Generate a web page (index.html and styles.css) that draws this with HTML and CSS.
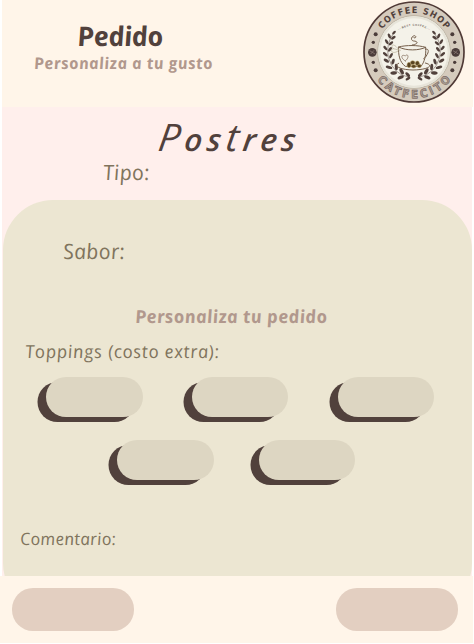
FILE: index.html
```html
<!DOCTYPE html>
<html lang="es">
<head>
<meta charset="utf-8">
<title>Pedido</title>
<link rel="stylesheet" href="styles.css">
</head>
<body>
<div class="page">
  <header class="header">
    <div class="heading">
      <h1 class="title"><span>Pedido</span></h1>
      <p class="subtitle"><span>Personaliza a tu gusto</span></p>
    </div>
    <svg class="logo" viewBox="0 0 306 306">
      <defs>
        <path id="top" d="M36 153A117 117 0 0 1 270 153"/>
        <path id="bottom" d="M14 153A139 139 0 0 0 292 153"/>
        <path id="small" d="M74 153A79 79 0 0 1 232 153"/>
        <g id="laurel">
          <path d="M139 229Q91 220 76 170Q67 124 96 92" fill="none" stroke="#51413c" stroke-width="1.5"/>
          <g fill="#51413c">
            <ellipse cx="93" cy="95" rx="7" ry="3.5" transform="rotate(-45 93 95)"/>
            <ellipse cx="79" cy="105" rx="8" ry="4" transform="rotate(65 79 105)"/>
            <ellipse cx="91" cy="110" rx="8" ry="4" transform="rotate(-35 91 110)"/>
            <ellipse cx="71" cy="122" rx="8" ry="4" transform="rotate(60 71 122)"/>
            <ellipse cx="84" cy="127" rx="8" ry="4" transform="rotate(-40 84 127)"/>
            <ellipse cx="67" cy="141" rx="8" ry="4" transform="rotate(50 67 141)"/>
            <ellipse cx="81" cy="145" rx="8" ry="4" transform="rotate(-50 81 145)"/>
            <ellipse cx="67" cy="160" rx="9" ry="4" transform="rotate(40 67 160)"/>
            <ellipse cx="84" cy="164" rx="9" ry="4" transform="rotate(-60 84 164)"/>
            <ellipse cx="70" cy="179" rx="9" ry="4.5" transform="rotate(30 70 179)"/>
            <ellipse cx="90" cy="182" rx="9" ry="4.5" transform="rotate(-70 90 182)"/>
            <ellipse cx="78" cy="199" rx="10" ry="4.5" transform="rotate(15 78 199)"/>
            <ellipse cx="100" cy="198" rx="10" ry="4.5" transform="rotate(-95 100 198)"/>
            <ellipse cx="92" cy="216" rx="10" ry="5" transform="rotate(-5 92 216)"/>
            <ellipse cx="116" cy="211" rx="10" ry="5" transform="rotate(60 116 211)"/>
            <ellipse cx="113" cy="229" rx="10" ry="5" transform="rotate(-25 113 229)"/>
            <ellipse cx="134" cy="221" rx="9" ry="4.5" transform="rotate(45 134 221)"/>
            <ellipse cx="135" cy="233" rx="8" ry="4" transform="rotate(-30 135 233)"/>
          </g>
        </g>
      </defs>
      <circle cx="153" cy="153" r="150" fill="#d5cbbd" stroke="#503a36" stroke-width="5"/>
      <circle cx="153" cy="153" r="109" fill="#f4f2e9" stroke="#aaa190" stroke-width="2"/>
      <circle cx="153" cy="153" r="104" fill="none" stroke="#e7e4d9" stroke-width="6"/>
      <text class="ring-text" text-anchor="middle"><textPath href="#top" startOffset="50%" textLength="222">COFFEE SHOP</textPath></text>
      <text class="ring-name" text-anchor="middle"><textPath href="#bottom" startOffset="50%" textLength="256">CATFECITO</textPath></text>
      <text class="ring-small" text-anchor="middle"><textPath href="#small" startOffset="50%" textLength="100">···BEST COFFEE···</textPath></text>
      <g fill="#4b3c3a">
        <circle cx="38" cy="100" r="6"/><circle cx="31" cy="124" r="5"/><circle cx="28" cy="154" r="13"/><circle cx="31" cy="184" r="5"/><circle cx="38" cy="208" r="6"/>
        <circle cx="268" cy="100" r="6"/><circle cx="275" cy="124" r="5"/><circle cx="278" cy="154" r="13"/><circle cx="275" cy="184" r="5"/><circle cx="268" cy="208" r="6"/>
      </g>
      <g fill="none" stroke="#94827b" stroke-width="2"><path d="M20 149L36 159M23 159L33 148M270 149L286 159M273 159L283 148"/></g>
      <use href="#laurel"/>
      <use href="#laurel" transform="translate(306 0) scale(-1 1)"/>
      <g fill="none" stroke="#755f4b" stroke-width="3" stroke-linecap="round">
        <path d="M107 138C105 160 110 184 127 196H174C184 184 190 163 188 139C165 132 129 132 107 138C130 150 168 149 188 139"/>
        <path d="M188 145C196 141 199 151 192 161C189 168 184 172 182 173"/>
        <path d="M107 187C91 192 105 206 150 207C197 206 215 193 187 186"/>
        <path d="M148 132C171 128 162 120 152 120C141 118 145 105 155 104C163 107 155 115 152 109"/>
        <path d="M127 180C110 170 116 158 127 165C133 156 142 168 127 180" stroke-width="2"/>
        <path d="M105 143C90 123 81 134 91 143C77 147 89 162 105 150M91 143L112 148" stroke="#b4aa91" stroke-width="2"/>
      </g>
      <g fill="#584321" stroke="#b9a067" stroke-width="1.5">
        <ellipse cx="138" cy="192" rx="6" ry="8"/><ellipse cx="149" cy="185" rx="7" ry="6"/><ellipse cx="152" cy="196" rx="7" ry="5"/><ellipse cx="163" cy="187" rx="6" ry="7"/><ellipse cx="169" cy="195" rx="6" ry="5"/>
      </g>
    </svg>
  </header>

  <main class="main">
    <h2 class="category"><span><b>P</b>os<b>t</b>res</span></h2>
    <p class="type"><span>Tipo:</span></p>
    <section class="card">
      <p class="flavor"><span>Sabor:</span></p>
      <h3 class="custom"><span>Personaliza tu pedido</span></h3>
      <p class="toppings"><span>Toppings (costo extra):</span></p>
      <div class="pills">
        <i class="pill"></i><i class="pill"></i><i class="pill"></i>
      </div>
      <div class="pills pills-second">
        <i class="pill"></i><i class="pill"></i>
      </div>
      <p class="comment"><span>Comentario:</span></p>
    </section>
  </main>

  <footer class="footer">
    <i class="button"></i>
    <i class="button"></i>
  </footer>
</div>
</body>
</html>
```
FILE: styles.css
```css
* { box-sizing: border-box; margin: 0; padding: 0; }
body { background: #fff; font-family: "Open Sans", "Noto Sans", sans-serif; font-style: italic; overflow: hidden; }
.page { width: 473px; height: 643px; display: flex; flex-direction: column; }
h1, h2, h3, p { white-space: nowrap; }
h1 span, h2 span, h3 span, p span { display: inline-block; transform: skewX(8deg); }

.header { height: 107px; margin-left: 2px; background: #fff5e9; display: flex; justify-content: space-between; padding: 0 8px 0 32px; }
.heading { padding-top: 16px; }
.title { margin-left: 43px; height: 36px; line-height: 39px; font-size: 27px; font-weight: 700; color: #51413c; letter-spacing: -.3px; }
.subtitle { height: 22px; line-height: 22px; font-size: 16px; font-weight: 700; color: #b1988d; letter-spacing: .5px; }
.logo { width: 102px; height: 102px; margin-top: 1px; font-style: normal; }
.ring-text { font: 700 27px "Liberation Sans Narrow", "DejaVu Sans Condensed", sans-serif; fill: #51413c; }
.ring-name { font: 700 34px "Liberation Sans Narrow", "DejaVu Sans Condensed", sans-serif; fill: #a99c92; stroke: #675551; stroke-width: 1.5px; }
.ring-small { font: 700 8px "Liberation Sans", sans-serif; fill: #6b5c55; }

.main { height: 469px; width: 470px; margin-left: 2px; padding-left: 1px; background: #ffefec; overflow: hidden; }
.category { height: 52px; padding: 4px 0 0 156px; line-height: 50px; font-size: 31px; font-weight: 600; color: #51413c; letter-spacing: 4.7px; }
.category b { font-size: 38px; font-weight: 500; }
.category span { transform: skewX(-8deg); }
.type { height: 41px; padding-left: 100px; line-height: 27px; font-size: 21px; letter-spacing: .3px; color: #80745d; }
.card { width: 469px; height: 413px; border-radius: 50px; background: #ece6d2; color: #80745d; }
.flavor { height: 104px; padding: 37px 0 0 60px; line-height: 29px; font-size: 21px; letter-spacing: .3px; }
.custom { height: 32px; padding-left: 132px; line-height: 25px; font-size: 18px; font-weight: 700; color: #b1988d; letter-spacing: .37px; }
.toppings { height: 41px; padding-left: 22px; line-height: 31px; font-size: 18px; letter-spacing: .68px; }
.pills { display: flex; gap: 49.3px; padding-left: 43px; height: 63px; }
.pills-second { gap: 45px; padding-left: 114px; }
.pill { width: 96.5px; height: 39.5px; border-radius: 20px; background: #ddd6c2; box-shadow: -8.5px 5px #51413c; }
.comment { padding: 23px 0 0 17px; line-height: 26px; font-size: 17px; letter-spacing: .3px; }

.footer { height: 67px; background: #fff5e9; display: flex; justify-content: space-between; padding: 12px 15px 0 12px; }
.button { width: 122px; height: 43px; border-radius: 21px; background: #e3cfc1; }
```
